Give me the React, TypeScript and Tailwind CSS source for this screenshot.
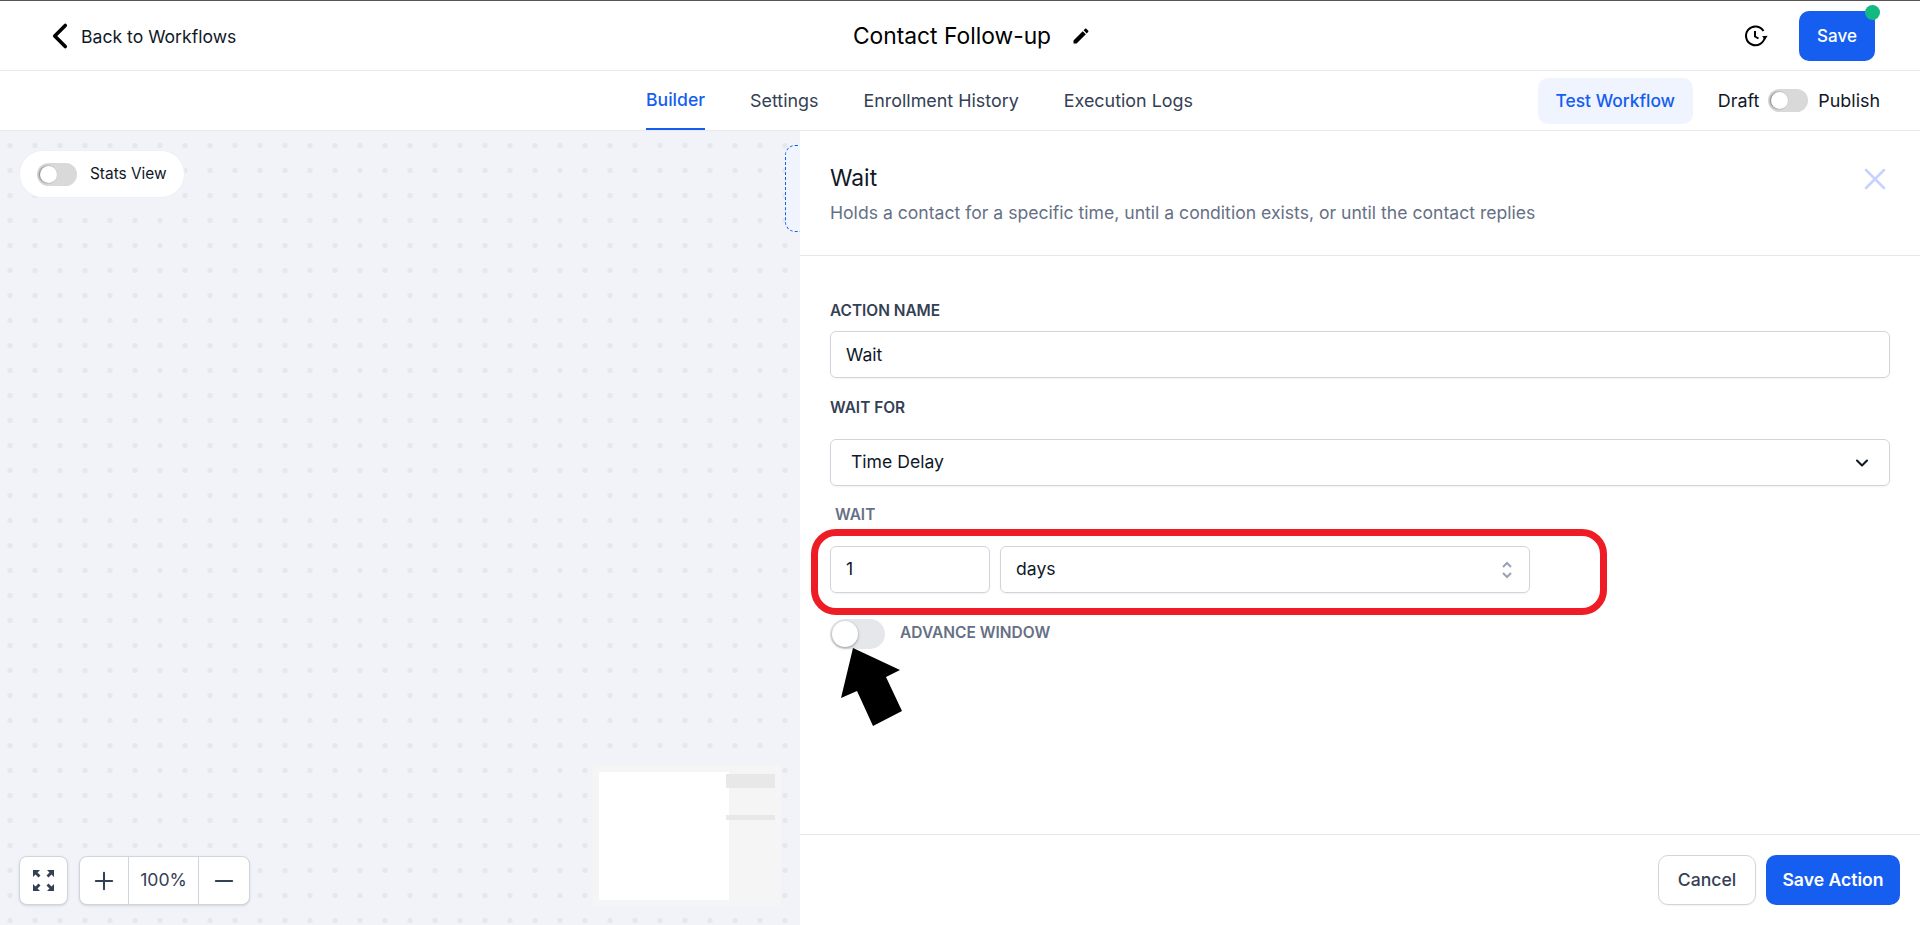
import { ChevronDown, ChevronLeft, Minus, Plus, X } from 'lucide-react'

function Toggle({ large = false }: { large?: boolean }) {
  if (large) {
    return (
      <div className="h-[30px] w-[55px] rounded-full bg-[#e5e7eb] p-[2px]">
        <div className="size-[26px] rounded-full bg-white shadow-[0_1px_3px_rgba(0,0,0,0.35)]" />
      </div>
    )
  }
  return (
    <div className="h-[23px] w-[40px] rounded-full bg-[#d9d9d9] p-[3px]">
      <div className="size-[17px] rounded-full bg-white shadow-[-1px_0_2px_rgba(0,0,0,0.45)]" />
    </div>
  )
}

function FieldLabel({ children, className = '' }: { children: React.ReactNode; className?: string }) {
  return <div className={`text-[15.4px] leading-[20px] font-semibold text-[#344054] ${className}`}>{children}</div>
}

function HistoryIcon() {
  return (
    <svg width="24" height="24" viewBox="0 0 24 24" fill="none" stroke="#000" strokeWidth="2">
      <path d="M20.8 12.5A9.4 9.4 0 1 1 19.5 7" />
      <path d="M11 7v5.5l3.5 2" strokeLinejoin="round" />
      <path d="M18 12.2l5.6-.4-2.4 4z" fill="#000" stroke="none" />
    </svg>
  )
}

function FitViewIcon() {
  const arrow = 'M0 0h7L4.5 2.5l3 3-2 2-3-3L0 7z'
  return (
    <svg width="21" height="21" viewBox="0 0 21 21" fill="#344054">
      <path d={arrow} />
      <path d={arrow} transform="translate(21 0) scale(-1 1)" />
      <path d={arrow} transform="translate(0 21) scale(1 -1)" />
      <path d={arrow} transform="translate(21 21) scale(-1 -1)" />
    </svg>
  )
}

function Canvas() {
  return (
    <div className="relative w-[800px] shrink-0 overflow-hidden bg-[#f1f3f8] bg-[radial-gradient(circle,#e6e7ea_2.5px,transparent_3px)] bg-[length:25px_25px] bg-[position:-2.5px_2px]">
      <div className="absolute top-[19px] left-[19px] flex h-[48px] w-[166px] items-center gap-[13px] rounded-full border border-[#eef0f4] bg-white pl-[17px]">
        <Toggle />
        <span className="text-[15.4px] text-[#101828]">Stats View</span>
      </div>

      <div className="absolute top-[14px] left-[785px] h-[87px] w-[30px] rounded-[10px] border border-dashed border-[#155eef] bg-[#eff4ff]" />

      <div className="absolute bottom-[20px] left-[19px] flex gap-[11px]">
        <button className="flex size-[49px] items-center justify-center rounded-[8px] border border-[#d0d5dd] bg-white shadow-sm">
          <FitViewIcon />
        </button>
        <div className="flex h-[49px] items-stretch rounded-[8px] border border-[#d0d5dd] bg-white text-[#344054] shadow-sm">
          <div className="flex w-[49px] items-center justify-center border-r border-[#d0d5dd]">
            <Plus size={28} strokeWidth={1.75} />
          </div>
          <div className="flex w-[70px] items-center justify-center border-r border-[#d0d5dd] text-[17.6px]">100%</div>
          <div className="flex w-[50px] items-center justify-center">
            <Minus size={28} strokeWidth={1.75} />
          </div>
        </div>
      </div>

      <div className="absolute top-[634px] left-[593px] h-[141px] w-[188px] bg-[#f5f5f5]">
        <div className="absolute top-[7px] left-[6px] h-[128px] w-[130px] bg-white" />
        <div className="absolute top-[9px] left-[133px] h-[14px] w-[49px] bg-[#e8e8e8]" />
        <div className="absolute top-[50px] left-[133px] h-[5px] w-[49px] bg-[#e8e8e8]" />
      </div>
    </div>
  )
}

function ActionPanel() {
  return (
    <div className="relative z-10 flex min-w-0 flex-1 flex-col bg-white">
      <div className="flex h-[125px] items-start justify-between border-b border-[#e5e7eb] pt-[32px] pr-[27px] pl-[30px]">
        <div>
          <div className="text-[22.8px] leading-[30px] text-[#101828]">Wait</div>
          <div className="mt-[8px] text-[17.6px] leading-[24px] text-[#667085]">
            Holds a contact for a specific time, until a condition exists, or until the contact replies
          </div>
        </div>
        <X size={36} strokeWidth={1.7} className="-mt-[2px] text-[#c7d2fe]" />
      </div>

      <div className="flex-1 px-[30px] pt-[45px]">
        <FieldLabel>ACTION NAME</FieldLabel>
        <div className="mt-[10px] flex h-[47px] items-center rounded-[6px] border border-[#d0d5dd] px-[15px] pt-[2px] text-[17.6px] text-[#101828] shadow-xs">
          Wait
        </div>

        <FieldLabel className="mt-[20px]">WAIT FOR</FieldLabel>
        <div className="mt-[21px] flex h-[47px] items-center justify-between rounded-[6px] border border-[#d0d5dd] pr-[17px] pl-[20px] text-[17.6px] text-[#101828] shadow-xs">
          Time Delay
          <ChevronDown size={20} strokeWidth={2.5} className="text-[#101828]" />
        </div>

        <div className="mt-[19px] pl-[5px] text-[15.4px] leading-[20px] font-semibold text-[#667085]">WAIT</div>

        <div className="relative mt-[21px] flex gap-[10px] pr-[360px]">
          <div className="flex h-[47px] w-[160px] items-center rounded-[6px] border border-[#d0d5dd] pl-[15px] text-[17.6px] text-[#101828] shadow-xs">
            1
          </div>
          <div className="flex h-[47px] flex-1 items-center justify-between rounded-[6px] border border-[#d0d5dd] pr-[16px] pl-[15px] text-[17.6px] text-[#101828] shadow-xs">
            days
            <svg width="12" height="20" viewBox="0 0 12 20" fill="none" stroke="#98a2b3" strokeWidth="2">
              <path d="M2 7l4-4 4 4M2 13l4 4 4-4" />
            </svg>
          </div>
          <div className="absolute top-[-17px] left-[-19px] h-[86px] w-[796px] rounded-[25px] border-[7px] border-[#ee1c25]" />
        </div>

        <div className="mt-[26px] flex items-center gap-[15px]">
          <Toggle large />
          <span className="-mt-[2px] text-[15.5px] font-semibold text-[#667085]">ADVANCE WINDOW</span>
        </div>
      </div>

      <div className="flex h-[91px] items-start justify-end gap-[10px] border-t border-[#e5e7eb] pt-[20px] pr-[20px]">
        <button className="h-[50px] w-[98px] rounded-[10px] border border-[#d0d5dd] bg-white text-[17.6px] font-medium text-[#344054] shadow-xs">
          Cancel
        </button>
        <button className="h-[50px] w-[134px] rounded-[10px] bg-[#155eef] text-[17.6px] font-semibold text-white">Save Action</button>
      </div>

      <svg className="absolute top-[517px] left-[40px]" width="64" height="80" viewBox="0 0 64 80" fill="#000">
        <polygon points="13,0 60,22 46,29 62,63 33,78 17,43 1,50" />
      </svg>
    </div>
  )
}

export default function App() {
  return (
    <div className="flex h-screen flex-col overflow-hidden border-t border-[#555] bg-white font-['Inter',sans-serif]">
      <header className="grid h-[70px] shrink-0 grid-cols-3 items-center border-b border-[#e8e9ec]">
        <div className="flex items-center pl-[39px] text-[17.6px] text-[#101828]">
          <ChevronLeft size={42} strokeWidth={2.1} className="mt-[1px] text-black" />
          <span className="mt-[3px]">Back to Workflows</span>
        </div>
        <div className="flex items-center justify-center gap-[20px] pl-[24px] text-[22.8px] text-black">
          <span className="mt-[2px]">Contact Follow-up</span>
          <svg width="20" height="20" viewBox="0 0 24 24" fill="#000">
            <path d="M3 17.25V21h3.75L17.81 9.94l-3.75-3.75L3 17.25zM20.71 7.04c.39-.39.39-1.02 0-1.41l-2.34-2.34c-.39-.39-1.02-.39-1.41 0l-1.83 1.83 3.75 3.75 1.83-1.83z" />
          </svg>
        </div>
        <div className="flex items-center justify-end gap-[31px] pr-[45px]">
          <HistoryIcon />
          <div className="relative">
            <button className="h-[50px] w-[76px] rounded-[10px] bg-[#155eef] pt-[2px] text-[17px] font-medium text-white">Save</button>
            <div className="absolute -top-[6px] -right-[5px] size-[15px] rounded-full bg-[#12b981]" />
          </div>
        </div>
      </header>

      <nav className="flex h-[60px] shrink-0 items-stretch border-b border-[#e8e9ec] pr-[40px] pl-[646px] text-[17.9px]">
        <div className="flex gap-[45px] text-[#344054]">
          <a className="flex items-center border-b-2 border-[#155eef] pt-[2px] text-[17.6px] font-medium text-[#155eef]">Builder</a>
          <a className="flex items-center pt-[2px]">Settings</a>
          <a className="flex items-center pt-[2px]">Enrollment History</a>
          <a className="flex items-center pt-[2px]">Execution Logs</a>
        </div>
        <div className="ml-auto flex items-center text-[#101828]">
          <button className="h-[46px] w-[155px] rounded-[10px] bg-[#eff4ff] pt-[2px] text-[17.4px] font-medium text-[#155eef]">Test Workflow</button>
          <span className="mt-[2px] ml-[25px]">Draft</span>
          <div className="mr-[10px] ml-[9px]">
            <Toggle />
          </div>
          <span className="mt-[2px]">Publish</span>
        </div>
      </nav>

      <main className="flex min-h-0 flex-1">
        <Canvas />
        <ActionPanel />
      </main>
    </div>
  )
}
